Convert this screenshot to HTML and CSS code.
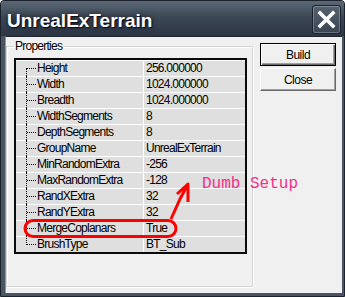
FILE: index.html
```html
<!DOCTYPE html>
<html lang="en">
<head>
    <meta charset="UTF-8">
    <meta name="viewport" content="width=device-width, initial-scale=1.0">
    <title>UnrealExTerrain</title>
    <link rel="stylesheet" href="styles.css">
</head>
<body>
    <div class="window">
        <div class="titlebar">
            <span class="title">UnrealExTerrain</span>
            <div class="close-x">
                <svg width="19" height="19" viewBox="0 0 19 19">
                    <path d="M3 3 L16 16 M16 3 L3 16" stroke="#fff" stroke-width="3.6" stroke-linecap="square"/>
                </svg>
            </div>
        </div>
        <div class="client">
            <fieldset class="props">
                <legend>Properties</legend>
                <div class="grid">
                    <div class="row first"><span class="name">Height</span><span class="value">256.000000</span></div>
                    <div class="row"><span class="name">Width</span><span class="value">1024.000000</span></div>
                    <div class="row"><span class="name">Breadth</span><span class="value">1024.000000</span></div>
                    <div class="row"><span class="name">WidthSegments</span><span class="value">8</span></div>
                    <div class="row"><span class="name">DepthSegments</span><span class="value">8</span></div>
                    <div class="row"><span class="name">GroupName</span><span class="value">UnrealExTerrain</span></div>
                    <div class="row"><span class="name">MinRandomExtra</span><span class="value">-256</span></div>
                    <div class="row"><span class="name">MaxRandomExtra</span><span class="value">-128</span></div>
                    <div class="row"><span class="name">RandXExtra</span><span class="value">32</span></div>
                    <div class="row"><span class="name">RandYExtra</span><span class="value">32</span></div>
                    <div class="row"><span class="name">MergeCoplanars</span><span class="value">True</span></div>
                    <div class="row last"><span class="name">BrushType</span><span class="value">BT_Sub</span></div>
                </div>
            </fieldset>
            <div class="actions">
                <button class="btn default">Build</button>
                <button class="btn">Close</button>
            </div>
        </div>

        <!-- hand drawn markup on top of the screenshot -->
        <svg class="markup" width="345" height="297" viewBox="0 0 345 297">
            <rect x="25" y="220.5" width="151" height="16" rx="8" fill="none" stroke="#f00" stroke-width="3"/>
            <path d="M171 219 L180 199 L188 184 M177 194 L188 184 L188 202" fill="none" stroke="#f00" stroke-width="3" stroke-linejoin="round"/>
        </svg>
        <span class="note">Dumb Setup</span>
    </div>
</body>
</html>
```

FILE: styles.css
```css
body{
    margin: 0;
    font-family: "Liberation Sans", Arial, sans-serif;
}

/* window frame */
.window{
    position: relative;
    width: 345px;
    height: 297px;
    box-sizing: border-box;
    border: 1px solid #1b222c;
    border-radius: 4px 4px 0 0;
    background: #4a5564;
    padding: 0 2px 3px 4px;
    display: flex;
    flex-direction: column;
}
.titlebar{
    height: 35px;
    margin: 0 -2px 0 -4px;
    padding: 0 3px 0 6px;
    background: linear-gradient(#5c6876, #3d4857 45%, #2b3544);
    border-radius: 3px 3px 0 0;
    display: flex;
    justify-content: space-between;
}
.title{
    margin-top: 9px;
    font-size: 19px;
    line-height: 22px;
    font-weight: bold;
    color: #fff;
    text-shadow: 0 0 5px rgba(0,0,0,.7), 1px 1px 1px #0a1020;
}
.close-x{
    margin-top: 4px;
    width: 29px;
    height: 29px;
    box-sizing: border-box;
    border: 1px solid #1b232e;
    border-radius: 3px;
    background: linear-gradient(#56616f, #3a4553);
    box-shadow: inset 0 0 0 1px rgba(255,255,255,.25);
    display: flex;
    align-items: center;
    justify-content: center;
}

/* dialog body */
.client{
    flex: 1;
    border-top: 1px solid #1e2631;
    border-left: 1px solid #8d949c;
    background: #f0f0f0;
    display: flex;
    align-items: flex-start;
    font-size: 12px;
    letter-spacing: -0.75px;
}
.props{
    margin: 3px 0 0 0;
    width: 247px;
    height: 247px;
    box-sizing: border-box;
    padding: 5px 5px 0 7px;
    border: 1px solid #d5d5d5;
    box-shadow: inset 1px 1px 0 #fff, 1px 1px 0 #fff;
}
.props legend{
    padding: 0 1px;
    line-height: 13px;
    color: #000;
}

/* property grid */
.grid{
    width: 233px;
    box-sizing: border-box;
    border: 2px solid #0b0b0b;
    background: #dfdfdf;
}
.row{
    display: grid;
    grid-template-columns: 127px 1fr;
    height: 16px;
    box-sizing: border-box;
    border-top: 1px solid #fff;
    line-height: 15px;
}
.name{
    position: relative;
    padding-left: 21px;
}
.name::before{
    content: "";
    position: absolute;
    left: 10px;
    top: -1px;
    bottom: 0;
    border-left: 1px dotted #000;
}
.name::after{
    content: "";
    position: absolute;
    left: 11px;
    top: 7px;
    width: 9px;
    border-top: 1px dotted #000;
}
.first .name::before{ top: 7px; }
.last .name::before{ bottom: 7px; }
.value{
    border-left: 1px solid #fff;
    padding-left: 2px;
}

/* buttons */
.actions{
    margin: 6px 0 0 7px;
    display: flex;
    flex-direction: column;
    gap: 2px;
}
.btn{
    width: 76px;
    height: 23px;
    padding: 0;
    font-family: inherit;
    font-size: 12px;
    letter-spacing: -0.5px;
    color: #000;
    background: #f0f0f0;
    border: 1px solid;
    border-color: #fff #696969 #696969 #fff;
    box-shadow: inset -1px -1px 0 #a0a0a0;
}
.btn.default{
    border-color: #000;
    box-shadow: inset 1px 1px 0 #fff, inset -1px -1px 0 #696969, inset -2px -2px 0 #a0a0a0;
}

/* red annotation layer */
.markup{
    position: absolute;
    left: -1px;
    top: -1px;
    pointer-events: none;
}
.note{
    position: absolute;
    left: 201px;
    top: 173px;
    font-family: "Liberation Mono", "Courier New", monospace;
    font-size: 16px;
    line-height: 20px;
    color: #f0308a;
}
```
